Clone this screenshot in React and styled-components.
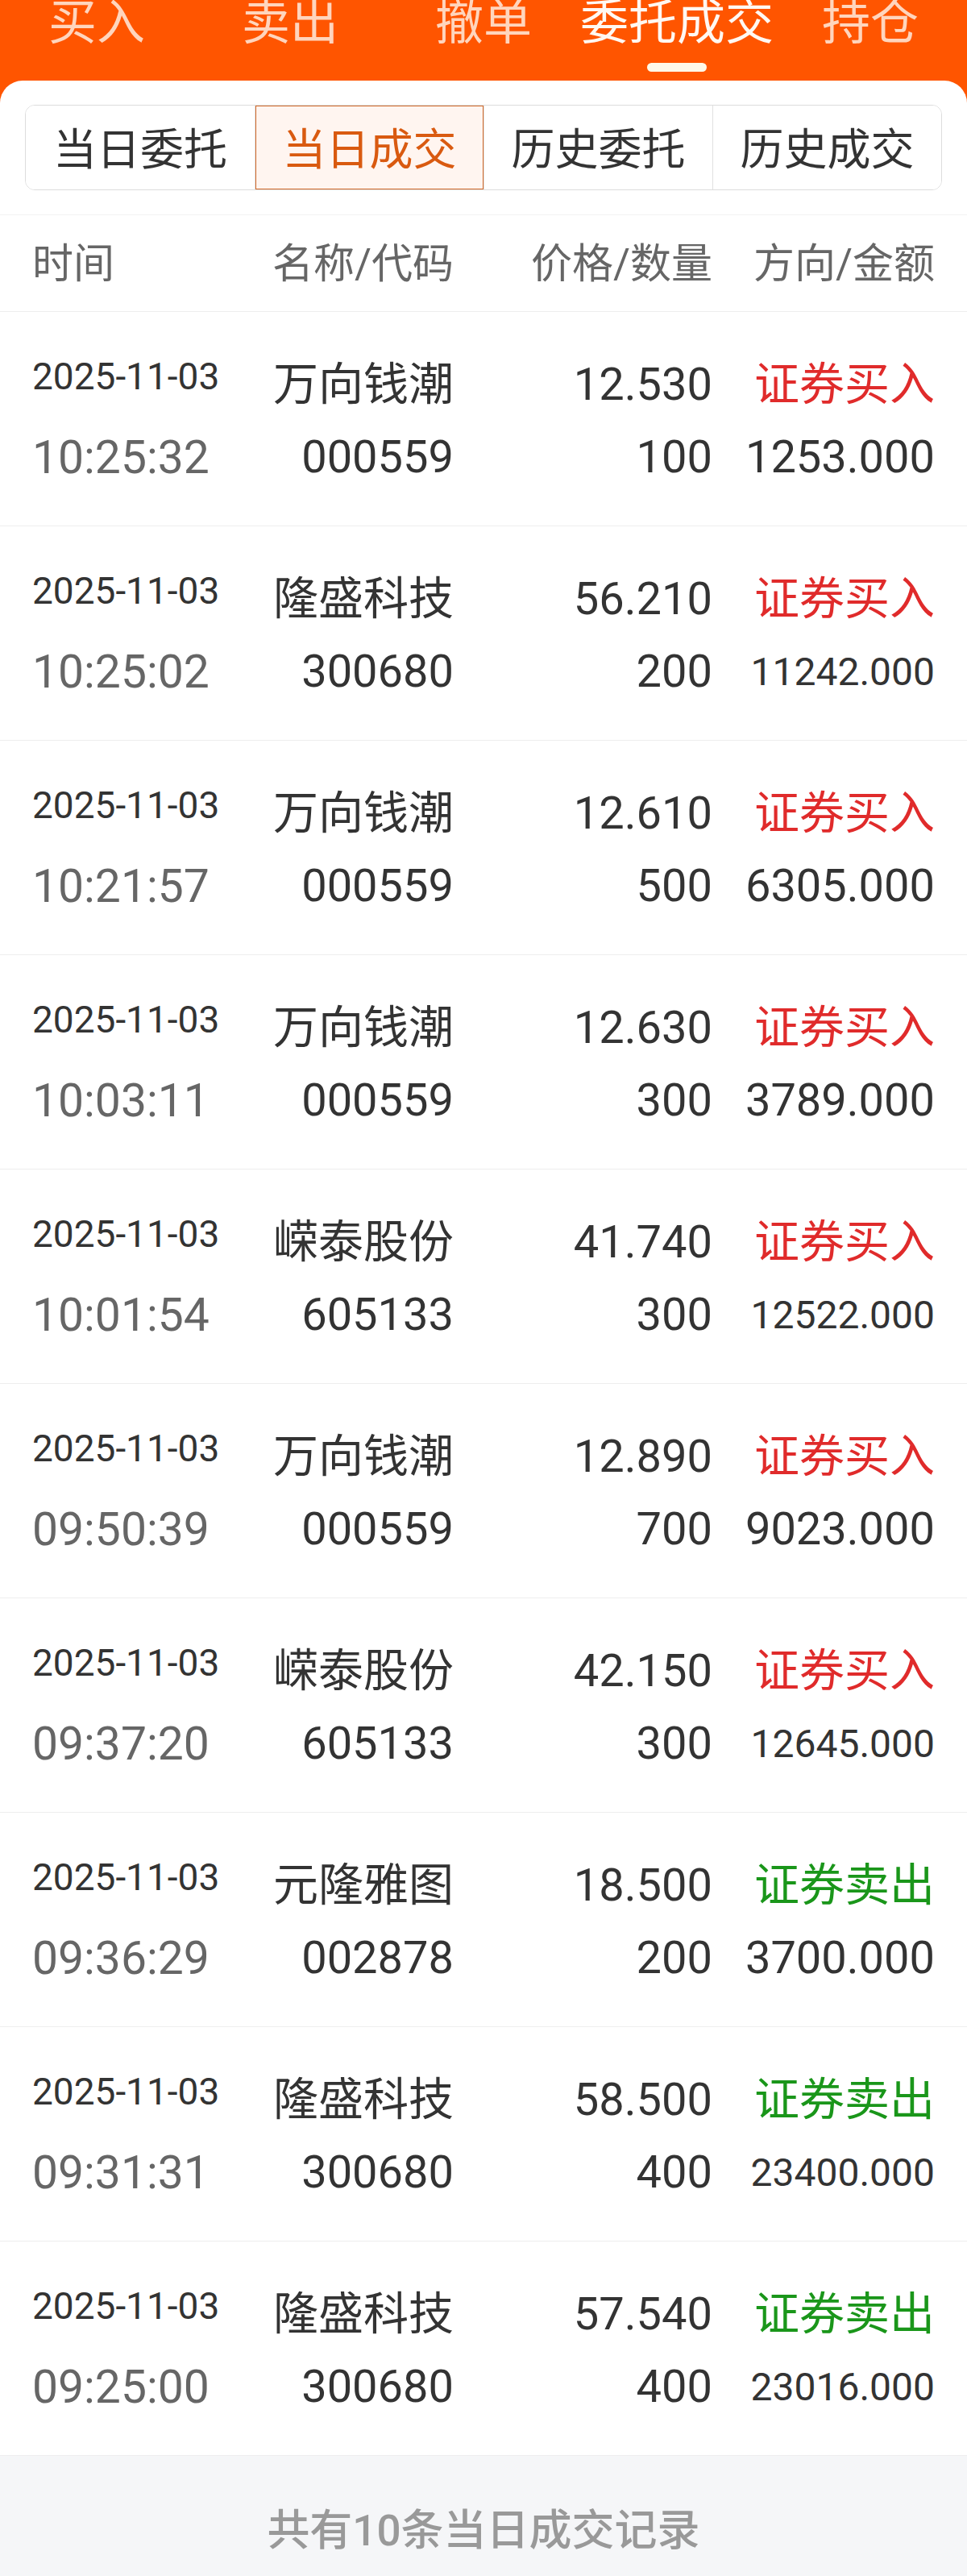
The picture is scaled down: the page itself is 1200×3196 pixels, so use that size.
import React from 'react'
import styled, { createGlobalStyle } from 'styled-components';

const GlobalStyle = createGlobalStyle`
    body{
        margin: 0;
        background: #ffffff;
        font-family: Roboto, "Noto Sans CJK SC", sans-serif;
    }
`;

const topTabs = ['买入', '卖出', '撤单', '委托成交', '持仓'];
const segments = ['当日委托', '当日成交', '历史委托', '历史成交'];

const trades = [
    { time: '10:25:32', name: '万向钱潮', code: '000559', price: '12.530', qty: '100', side: 'buy', amount: '1253.000' },
    { time: '10:25:02', name: '隆盛科技', code: '300680', price: '56.210', qty: '200', side: 'buy', amount: '11242.000' },
    { time: '10:21:57', name: '万向钱潮', code: '000559', price: '12.610', qty: '500', side: 'buy', amount: '6305.000' },
    { time: '10:03:11', name: '万向钱潮', code: '000559', price: '12.630', qty: '300', side: 'buy', amount: '3789.000' },
    { time: '10:01:54', name: '嵘泰股份', code: '605133', price: '41.740', qty: '300', side: 'buy', amount: '12522.000' },
    { time: '09:50:39', name: '万向钱潮', code: '000559', price: '12.890', qty: '700', side: 'buy', amount: '9023.000' },
    { time: '09:37:20', name: '嵘泰股份', code: '605133', price: '42.150', qty: '300', side: 'buy', amount: '12645.000' },
    { time: '09:36:29', name: '元隆雅图', code: '002878', price: '18.500', qty: '200', side: 'sell', amount: '3700.000' },
    { time: '09:31:31', name: '隆盛科技', code: '300680', price: '58.500', qty: '400', side: 'sell', amount: '23400.000' },
    { time: '09:25:00', name: '隆盛科技', code: '300680', price: '57.540', qty: '400', side: 'sell', amount: '23016.000' },
];

function App() {
    return (
        <PageStyled>
            <GlobalStyle />
            <TopBarStyled>
                {
                    topTabs.map((tab, i) => {
                        return <TopTab key={tab} $active={i === 3}>
                            <span>{tab}</span>
                            {i === 3 && <Indicator />}
                        </TopTab>
                    })
                }
            </TopBarStyled>
            <CardStyled>
                <SegmentBar>
                    {
                        segments.map((seg, i) => {
                            return <Segment key={seg} $active={i === 1}>{seg}</Segment>
                        })
                    }
                </SegmentBar>
                <HeadRow>
                    <HeadCell>时间</HeadCell>
                    <HeadCell $right>名称/代码</HeadCell>
                    <HeadCell $right>价格/数量</HeadCell>
                    <HeadCell $right>方向/金额</HeadCell>
                </HeadRow>
                {
                    trades.map((item) => {
                        return <TradeRow key={item.time}>
                            <DateText>2025-11-03</DateText>
                            <NameText>{item.name}</NameText>
                            <NumText>{item.price}</NumText>
                            <SideText $side={item.side}>{item.side === 'buy' ? '证券买入' : '证券卖出'}</SideText>
                            <TimeText>{item.time}</TimeText>
                            <NumText>{item.code}</NumText>
                            <NumText>{item.qty}</NumText>
                            <NumText $small={item.amount.length > 8}>{item.amount}</NumText>
                        </TradeRow>
                    })
                }
                <FooterStyled>共有10条当日成交记录</FooterStyled>
            </CardStyled>
        </PageStyled>
    )
}

const PageStyled = styled.div`
    background: #ff5500;
    width: 1200px;
`;

const TopBarStyled = styled.nav`
    display: grid;
    grid-template-columns: repeat(5, 1fr);
    height: 100px;
`;

const TopTab = styled.div`
    display: flex;
    flex-direction: column;
    align-items: center;
    span{
        font-size: 60px;
        line-height: 58px;
        color: ${props => props.$active ? '#fff8f2' : '#ffd5bd'};
        white-space: nowrap;
    }
`;

const Indicator = styled.div`
    margin-top: 20px;
    width: 74px;
    height: 11px;
    border-radius: 6px;
    background: #fff8e8;
`;

const CardStyled = styled.main`
    background: #ffffff;
    border-radius: 28px 28px 0 0;
    overflow: hidden;
    padding-top: 30px;
`;

const SegmentBar = styled.div`
    margin: 0 31px 30px;
    display: grid;
    grid-template-columns: repeat(4, 1fr);
    height: 104px;
    border: 1px solid #dddddd;
    border-radius: 12px;
    overflow: hidden;
`;

const Segment = styled.div`
    display: flex;
    align-items: center;
    justify-content: center;
    padding-bottom: 4px;
    font-size: 54px;
    color: ${props => props.$active ? '#d95a10' : '#333333'};
    background: ${props => props.$active ? '#fff5f0' : '#ffffff'};
    box-shadow: ${props => props.$active ? 'inset 0 0 0 1px #d2692a' : 'none'};
    &:not(:first-child){
        border-left: 1px solid #e0e0e0;
    }
`;

const HeadRow = styled.div`
    display: grid;
    grid-template-columns: 260px 263px 321px 276px;
    padding: 0 40px;
    height: 119px;
    align-items: center;
    border-top: 1px solid #f2f2f2;
    border-bottom: 1px solid #eeeeee;
`;

const HeadCell = styled.div`
    padding-bottom: 8px;
    font-size: 51px;
    color: #666666;
    text-align: ${props => props.$right ? 'right' : 'left'};
    white-space: nowrap;
`;

const TradeRow = styled.div`
    display: grid;
    grid-template-columns: 260px 263px 321px 276px;
    grid-template-rows: 90px 90px;
    padding: 45px 40px 40px;
    border-bottom: 1px solid #eeeeee;
    align-items: center;
    justify-items: end;
    & > :nth-child(4n + 1){
        justify-self: start;
    }
`;

const DateText = styled.div`
    align-self: start;
    font-size: 46px;
    line-height: 70px;
    color: #333333;
`;

const TimeText = styled.div`
    font-size: 57px;
    color: #666666;
`;

const NameText = styled.div`
    padding-bottom: 12px;
    font-size: 56px;
    color: #333333;
    white-space: nowrap;
`;

const NumText = styled.div`
    font-size: ${props => props.$small ? '48px' : '56px'};
    color: #333333;
`;

const SideText = styled.div`
    padding-bottom: 12px;
    font-size: 56px;
    color: ${props => props.$side === 'buy' ? '#e02b2b' : '#1a961a'};
    white-space: nowrap;
`;

const FooterStyled = styled.footer`
    background: #f5f6f8;
    padding: 63px 0 28px;
    line-height: 60px;
    text-align: center;
    font-size: 53px;
    font-weight: 500;
    color: #999999;
`;

export default App;
